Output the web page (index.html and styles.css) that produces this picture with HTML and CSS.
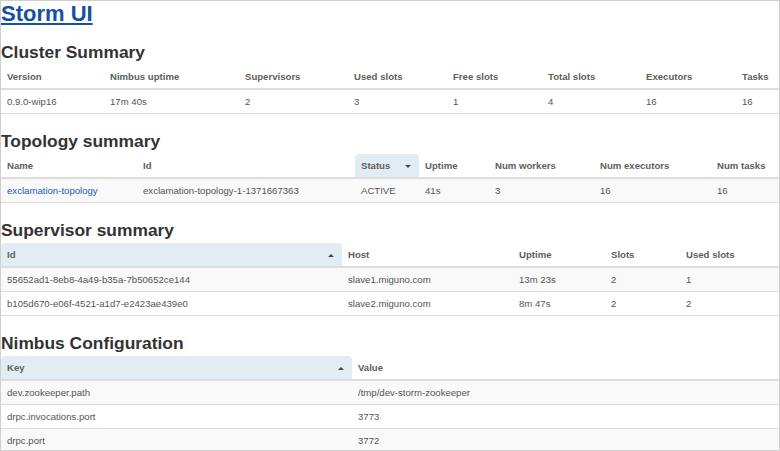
FILE: index.html
```html
<!DOCTYPE html>
<html>
<head>
<meta charset="utf-8">
<title>Storm UI</title>
<link rel="stylesheet" href="styles.css">
</head>
<body>
<div class="frame">
  <h1 class="title"><a href="#">Storm UI</a></h1>

  <h2>Cluster Summary</h2>
  <table class="tbl cluster">
    <thead>
      <tr><th>Version</th><th>Nimbus uptime</th><th>Supervisors</th><th>Used slots</th><th>Free slots</th><th>Total slots</th><th>Executors</th><th>Tasks</th></tr>
    </thead>
    <tbody>
      <tr class="plain"><td>0.9.0-wip16</td><td>17m 40s</td><td>2</td><td>3</td><td>1</td><td>4</td><td>16</td><td>16</td></tr>
    </tbody>
  </table>

  <h2>Topology summary</h2>
  <table class="tbl topo">
    <thead>
      <tr><th>Name</th><th>Id</th><th class="sorted">Status<span class="arrow down"></span></th><th>Uptime</th><th>Num workers</th><th>Num executors</th><th>Num tasks</th></tr>
    </thead>
    <tbody>
      <tr><td><a class="lnk" href="#">exclamation-topology</a></td><td>exclamation-topology-1-1371667363</td><td>ACTIVE</td><td>41s</td><td>3</td><td>16</td><td>16</td></tr>
    </tbody>
  </table>

  <h2>Supervisor summary</h2>
  <table class="tbl sup">
    <thead>
      <tr><th class="sorted">Id<span class="arrow up"></span></th><th>Host</th><th>Uptime</th><th>Slots</th><th>Used slots</th></tr>
    </thead>
    <tbody>
      <tr><td>55652ad1-8eb8-4a49-b35a-7b50652ce144</td><td>slave1.miguno.com</td><td>13m 23s</td><td>2</td><td>1</td></tr>
      <tr><td>b105d670-e06f-4521-a1d7-e2423ae439e0</td><td>slave2.miguno.com</td><td>8m 47s</td><td>2</td><td>2</td></tr>
    </tbody>
  </table>

  <h2>Nimbus Configuration</h2>
  <table class="tbl nimbus">
    <thead>
      <tr><th class="sorted">Key<span class="arrow up"></span></th><th>Value</th></tr>
    </thead>
    <tbody>
      <tr><td>dev.zookeeper.path</td><td>/tmp/dev-storm-zookeeper</td></tr>
      <tr><td>drpc.invocations.port</td><td>3773</td></tr>
      <tr><td>drpc.port</td><td>3772</td></tr>
    </tbody>
  </table>
</div>
</body>
</html>
```
FILE: styles.css
```css
html, body {
  margin: 0;
  padding: 0;
  background: #fff;
}
body {
  font-family: "Liberation Sans", Arial, Helvetica, sans-serif;
  color: #555;
}
.frame {
  width: 780px;
  height: 451px;
  box-sizing: border-box;
  border: 1px solid #cfcfcf;
  overflow: hidden;
}
.title {
  margin: 0;
  padding-top: 1px;
  font-size: 22px;
  line-height: 23px;
  font-weight: bold;
}
.title a {
  color: #1450a3;
  text-decoration: underline;
  text-decoration-thickness: 2px;
  text-underline-offset: 2px;
}
h2 {
  margin: 16px 0 1px 0;
  font-size: 17.4px;
  line-height: 23px;
  font-weight: bold;
  color: #333;
}
.tbl {
  width: 100%;
  border-collapse: collapse;
  border-spacing: 0;
  table-layout: fixed;
  font-size: 9.6px;
}
.tbl th, .tbl td {
  text-align: left;
  padding: 4px 6px;
  line-height: 15px;
  white-space: nowrap;
  overflow: hidden;
}
.tbl th {
  font-weight: bold;
  color: #5e5e5e;
  border-bottom: 2px solid #ddd;
}
.tbl td {
  border-bottom: 1px solid #ddd;
  color: #555;
}
.tbl tbody tr:nth-child(odd) td {
  background: #f9f9f9;
}
.tbl tbody tr.plain td {
  background: #fff;
}
.tbl th.sorted {
  background: #e2edf3;
  border-radius: 4px 4px 0 0;
  position: relative;
}
.arrow {
  position: absolute;
  right: 8px;
  top: 11px;
  width: 0;
  height: 0;
  border-left: 3px solid transparent;
  border-right: 3px solid transparent;
}
.arrow.down {
  border-top: 3px solid #444;
}
.arrow.up {
  border-bottom: 3px solid #444;
}
.lnk {
  color: #1a5bc4;
  text-decoration: none;
}

/* column widths */
.cluster th:nth-child(1) { width: 91px; }
.cluster th:nth-child(2) { width: 123px; }
.cluster th:nth-child(3) { width: 97px; }
.cluster th:nth-child(4) { width: 87px; }
.cluster th:nth-child(5) { width: 83px; }
.cluster th:nth-child(6) { width: 86px; }
.cluster th:nth-child(7) { width: 84px; }

.topo th:nth-child(1) { width: 124px; }
.topo th:nth-child(2) { width: 206px; }
.topo th:nth-child(3) { width: 52px; }
.topo th:nth-child(4) { width: 58px; }
.topo th:nth-child(5) { width: 93px; }
.topo th:nth-child(6) { width: 105px; }

.sup th:nth-child(1) { width: 329px; }
.sup th:nth-child(2) { width: 159px; }
.sup th:nth-child(3) { width: 80px; }
.sup th:nth-child(4) { width: 63px; }

.nimbus th:nth-child(1) { width: 339px; }
```
